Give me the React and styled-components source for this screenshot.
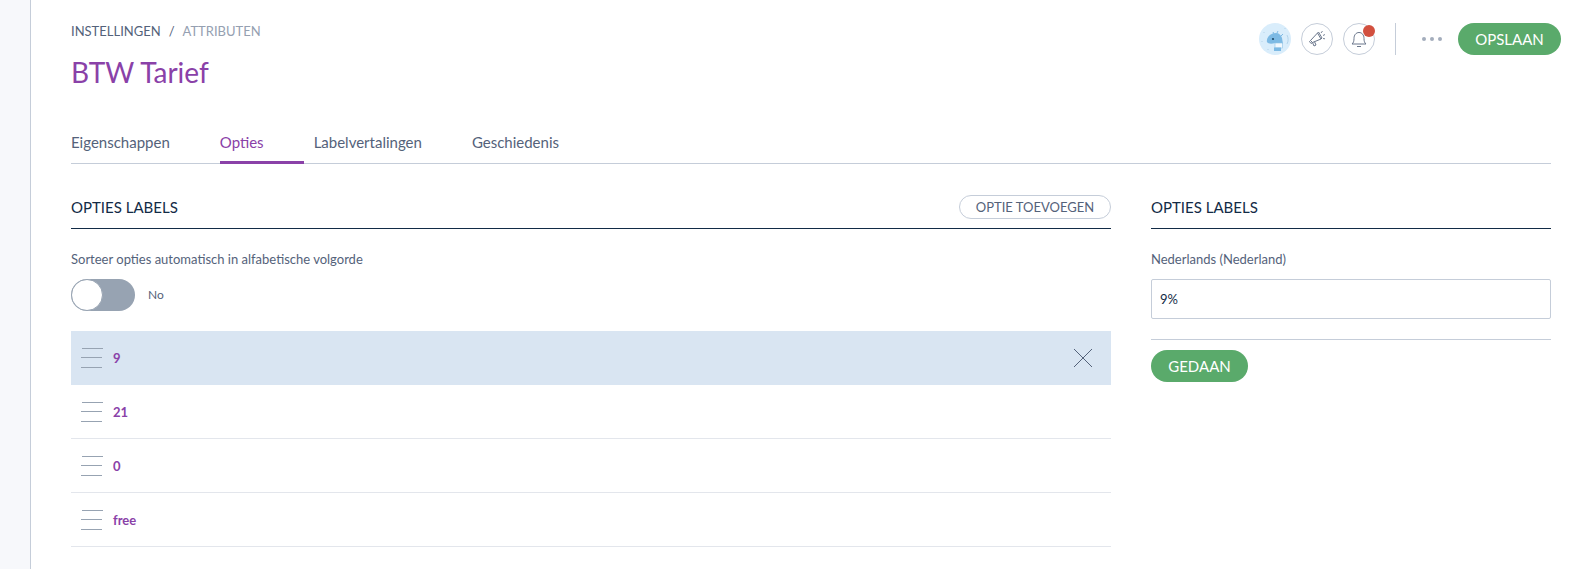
import React from "react";
import styled, { createGlobalStyle } from "styled-components";

const GlobalStyle = createGlobalStyle`
  html, body { margin: 0; padding: 0; background: #fff; height: 100%; overflow: hidden; }
  body { font-family: Lato, "Open Sans", sans-serif; color: #54627a; }
  * { box-sizing: border-box; }
`;

const Page = styled.div`
  display: flex;
  height: 569px;
  overflow: hidden;
`;
const Sidebar = styled.div`
  width: 31px;
  flex: none;
  background: #f7f8fb;
  border-right: 1px solid #c5cdd9;
`;
const Main = styled.main`
  flex: 1;
  padding: 23px 23px 0 40px;
`;
const Header = styled.header`
  display: flex;
  justify-content: space-between;
  align-items: flex-start;
  margin-right: -10px;
  height: 102px;
`;
const Crumbs = styled.div`
  display: flex;
  gap: 8px;
  font-size: 13px;
  line-height: 16px;
  color: #54627a;
  span:last-child { color: #95a0b1; }
`;
const Title = styled.h1`
  margin: 13px 0 0;
  font-size: 28px;
  line-height: 40px;
  font-weight: 400;
  color: #8a41a8;
`;
const Actions = styled.div`
  display: flex;
  align-items: center;
`;
const Circle = styled.div`
  position: relative;
  width: 32px;
  height: 32px;
  border-radius: 50%;
  margin-right: 10px;
  display: flex;
  align-items: center;
  justify-content: center;
  border: ${(p) => (p.$avatar ? "none" : "1px solid #c5cdd9")};
  background: ${(p) => (p.$avatar ? "#d9edfb" : "#fff")};
`;
const Badge = styled.span`
  position: absolute;
  top: 1px;
  right: -1px;
  width: 12px;
  height: 12px;
  border-radius: 50%;
  background: #d2503f;
`;
const Separator = styled.div`
  width: 1px;
  height: 32px;
  background: #c5cdd9;
  margin: 0 26px 0 10px;
`;
const Dots = styled.div`
  display: flex;
  gap: 4px;
  margin-right: 16px;
  i {
    width: 4px;
    height: 4px;
    border-radius: 50%;
    background: #a3adbc;
  }
`;
const PillButton = styled.button`
  height: 32px;
  width: ${(p) => p.$width}px;
  border: none;
  border-radius: 16px;
  background: #5aaa6b;
  color: #fff;
  font-family: inherit;
  font-size: 15px;
  padding: 0;
`;
const Tabs = styled.nav`
  display: flex;
  height: 39px;
  border-bottom: 1px solid #c5cdd9;
`;
const Tab = styled.div`
  height: 39px;
  padding: 8px 40px 0 0;
  margin-right: 10px;
  font-size: 15px;
  line-height: 18px;
  color: ${(p) => (p.$active ? "#8a41a8" : "#54627a")};
  border-bottom: 3px solid ${(p) => (p.$active ? "#8a41a8" : "transparent")};
`;
const Columns = styled.div`
  display: grid;
  grid-template-columns: 1fr 400px;
  column-gap: 40px;
  margin-top: 31px;
`;
const SectionHead = styled.div`
  display: flex;
  justify-content: space-between;
  align-items: flex-start;
  height: 34px;
  border-bottom: 1px solid #122b46;
`;
const SectionTitle = styled.h2`
  margin: 3px 0 0;
  font-size: 15px;
  line-height: 18px;
  font-weight: 400;
  color: #122b46;
`;
const OutlineButton = styled.button`
  width: 152px;
  height: 24px;
  border: 1px solid #c5cdd9;
  border-radius: 12px;
  background: #fff;
  color: #54627a;
  font-family: inherit;
  font-size: 13px;
  padding: 0;
`;
const FieldLabel = styled.div`
  margin-top: 22px;
  font-size: 13px;
  line-height: 16px;
  color: #54627a;
`;
const ToggleRow = styled.div`
  display: flex;
  align-items: center;
  gap: 13px;
  margin-top: 12px;
  height: 32px;
  font-size: 12px;
  line-height: 32px;
  color: #54627a;
`;
const Toggle = styled.div`
  width: 64px;
  height: 32px;
  border-radius: 16px;
  background: #97a3b2;
  display: flex;
`;
const Knob = styled.div`
  width: 32px;
  height: 32px;
  border-radius: 50%;
  background: #fff;
  border: 1px solid #97a3b2;
`;
const OptionList = styled.div`
  margin-top: 20px;
`;
const OptionRow = styled.div`
  height: 54px;
  display: flex;
  align-items: center;
  padding: 0 19px 0 10px;
  background: ${(p) => (p.$selected ? "#d9e5f2" : "#fff")};
  border-bottom: 1px solid ${(p) => (p.$selected ? "#d9e5f2" : "#e3e6ec")};
`;
const OptionName = styled.span`
  margin-left: 10px;
  flex: 1;
  font-size: 13px;
  font-weight: 700;
  color: #8a41a8;
`;
const TextInput = styled.input`
  display: block;
  width: 100%;
  height: 40px;
  margin-top: 12px;
  padding: 0 8px;
  border: 1px solid #c5cdd9;
  border-radius: 2px;
  font-family: inherit;
  font-size: 13px;
  color: #122b46;
`;
const Divider = styled.div`
  height: 1px;
  margin: 20px 0 10px;
  background: #c5cdd9;
`;

function Handle() {
  return (
    <svg width="22" height="22" viewBox="0 0 22 22" stroke="#97a3b2" strokeWidth="1">
      <path d="M1 1.500h21M0 10.500h21M0 20.500h21" />
    </svg>
  );
}

function Mascot() {
  return (
    <svg width="32" height="32" viewBox="0 0 32 32">
      <path d="M8 19c-1-4 3-9 9-9 3 0 5 2 6 5l1 6h-8v-1c-3 1-7 1-8-1z" fill="#7dbae4" />
      <path d="M14 9l1 2M19 8l-1 2M24 11l-2 2" stroke="#7dbae4" strokeWidth="1" fill="none" />
      <rect x="16" y="20" width="7.500" height="5" fill="#f2f9fe" stroke="#8fc2e5" strokeWidth=".6" />
      <rect x="15" y="24.500" width="7" height="3.500" fill="#7dbae4" />
      <circle cx="14" cy="16" r="1.100" fill="#1f4a68" />
      <path d="M28 12c1.500 3 1.500 6 0 9M5 9v1M3 18v1M9 26v1M26 5v1" stroke="#a9cde6" strokeWidth=".8" fill="none" />
    </svg>
  );
}

function Megaphone() {
  return (
    <svg width="20" height="20" viewBox="0 0 20 20" fill="none" stroke="#6b778c" strokeWidth="1" strokeLinejoin="round">
      <path d="M3.500 11.500l7-7.500 3.500 6-8.500 3.500zM3.500 11.500l-1 1 1.500 2 1.500-1" />
      <path d="M10.500 4l1-1 3.500 6-1 1" />
      <path d="M5.500 13.500l1.500 3.500 2-1-1.500-3.300" />
      <path d="M14 4l1.500-2M16 6.500l2-1M16 9.500l2 .3" strokeWidth=".9" />
    </svg>
  );
}

function Bell() {
  return (
    <svg width="20" height="20" viewBox="0 0 20 20" fill="none" stroke="#6b778c" strokeWidth="1" strokeLinejoin="round">
      <path d="M3 15c1.500-1.200 2-3 2-5.500C5 6 7 3.500 10 3.500S15 6 15 9.500c0 2.500.5 4.300 2 5.500z" />
      <path d="M8 17.500h4" />
    </svg>
  );
}

function CloseIcon() {
  return (
    <svg width="18" height="18" viewBox="0 0 18 18" stroke="#54627a" strokeWidth="1">
      <path d="M0 0l18 18M18 0L0 18" />
    </svg>
  );
}

const options = ["9", "21", "0", "free"];

export default function App() {
  return (
    <Page>
      <GlobalStyle />
      <Sidebar />
      <Main>
        <Header>
          <div>
            <Crumbs>
              <span>INSTELLINGEN</span>
              <span>/</span>
              <span>ATTRIBUTEN</span>
            </Crumbs>
            <Title>BTW Tarief</Title>
          </div>
          <Actions>
            <Circle $avatar><Mascot /></Circle>
            <Circle><Megaphone /></Circle>
            <Circle><Bell /><Badge /></Circle>
            <Separator />
            <Dots><i /><i /><i /></Dots>
            <PillButton $width={103}>OPSLAAN</PillButton>
          </Actions>
        </Header>
        <Tabs>
          <Tab>Eigenschappen</Tab>
          <Tab $active>Opties</Tab>
          <Tab>Labelvertalingen</Tab>
          <Tab>Geschiedenis</Tab>
        </Tabs>
        <Columns>
          <section>
            <SectionHead>
              <SectionTitle>OPTIES LABELS</SectionTitle>
              <OutlineButton>OPTIE TOEVOEGEN</OutlineButton>
            </SectionHead>
            <FieldLabel>Sorteer opties automatisch in alfabetische volgorde</FieldLabel>
            <ToggleRow>
              <Toggle><Knob /></Toggle>
              <span>No</span>
            </ToggleRow>
            <OptionList>
              {options.map((name, i) => (
                <OptionRow key={name} $selected={i === 0}>
                  <Handle />
                  <OptionName>{name}</OptionName>
                  {i === 0 && <CloseIcon />}
                </OptionRow>
              ))}
            </OptionList>
          </section>
          <section>
            <SectionHead>
              <SectionTitle>OPTIES LABELS</SectionTitle>
            </SectionHead>
            <FieldLabel>Nederlands (Nederland)</FieldLabel>
            <TextInput defaultValue="9%" />
            <Divider />
            <PillButton $width={97}>GEDAAN</PillButton>
          </section>
        </Columns>
      </Main>
    </Page>
  );
}
